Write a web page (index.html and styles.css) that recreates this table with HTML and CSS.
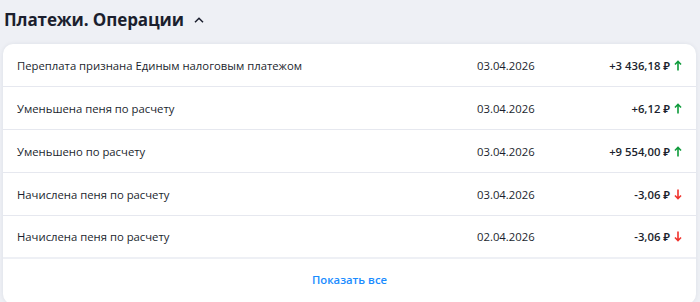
FILE: index.html
```html
<!DOCTYPE html>
<html lang="ru">
<head>
<meta charset="utf-8">
<link rel="stylesheet" href="styles.css">
</head>
<body>
<div class="page">
  <div class="header">
    <h2 class="title">Платежи. Операции</h2>
    <svg class="chevron" width="10" height="6" viewBox="0 0 10 6"><path d="M1 5.2 L5 1.2 L9 5.2" fill="none" stroke="#1b1f2e" stroke-width="1.5"/></svg>
  </div>
  <div class="card">
    <div class="row">
      <div class="name">Переплата признана Единым налоговым платежом</div>
      <div class="date">03.04.2026</div>
      <div class="amount">+3 436,18 ₽<svg class="arrow" width="8" height="11" viewBox="0 0 8 11"><path d="M4 10.5 V1.5 M1 4.5 L4 1.3 L7 4.5" fill="none" stroke="#0d9b3a" stroke-width="1.6"/></svg></div>
    </div>
    <div class="row">
      <div class="name">Уменьшена пеня по расчету</div>
      <div class="date">03.04.2026</div>
      <div class="amount">+6,12 ₽<svg class="arrow" width="8" height="11" viewBox="0 0 8 11"><path d="M4 10.5 V1.5 M1 4.5 L4 1.3 L7 4.5" fill="none" stroke="#0d9b3a" stroke-width="1.6"/></svg></div>
    </div>
    <div class="row">
      <div class="name">Уменьшено по расчету</div>
      <div class="date">03.04.2026</div>
      <div class="amount">+9 554,00 ₽<svg class="arrow" width="8" height="11" viewBox="0 0 8 11"><path d="M4 10.5 V1.5 M1 4.5 L4 1.3 L7 4.5" fill="none" stroke="#0d9b3a" stroke-width="1.6"/></svg></div>
    </div>
    <div class="row">
      <div class="name">Начислена пеня по расчету</div>
      <div class="date">03.04.2026</div>
      <div class="amount">-3,06 ₽<svg class="arrow" width="8" height="11" viewBox="0 0 8 11"><path d="M4 0.5 V9.5 M1 6.5 L4 9.7 L7 6.5" fill="none" stroke="#f0322c" stroke-width="1.6"/></svg></div>
    </div>
    <div class="row last">
      <div class="name">Начислена пеня по расчету</div>
      <div class="date">02.04.2026</div>
      <div class="amount">-3,06 ₽<svg class="arrow" width="8" height="11" viewBox="0 0 8 11"><path d="M4 0.5 V9.5 M1 6.5 L4 9.7 L7 6.5" fill="none" stroke="#f0322c" stroke-width="1.6"/></svg></div>
    </div>
    <div class="footer"><a class="show-all" href="#">Показать все</a></div>
  </div>
</div>
</body>
</html>
```
FILE: styles.css
```css
* { box-sizing: border-box; }
html, body { margin: 0; padding: 0; }
body {
  background: #eef0f5;
  font-family: "Open Sans", "Noto Sans", sans-serif;
  color: #1b1f2e;
  width: 700px;
  height: 302px;
  overflow: hidden;
}
.page {
  padding: 5px 4px 0 3px;
}
.header {
  display: flex;
  align-items: center;
  gap: 10px;
  height: 28px;
  padding-left: 1px;
}
.title {
  margin: 0;
  font-size: 17px;
  font-weight: 700;
  letter-spacing: -0.1px;
  color: #1b1f2e;
}
.chevron { margin-top: 1px; }
.card {
  margin-top: 11px;
  background: #fff;
  border-radius: 10px;
  box-shadow: 0 0 4px rgba(30, 40, 70, 0.08);
  height: 260px;
}
.row {
  display: grid;
  grid-template-columns: 1fr 117px 88px;
  align-items: center;
  height: 43px;
  padding: 0 14px 0 14px;
  border-bottom: 1.5px solid #e6e8ef;
  font-size: 11.3px;
}
.row.last { border-bottom: 2px solid #eef0f5; }
.amount {
  display: flex;
  justify-content: flex-end;
  align-items: center;
  gap: 4px;
  font-weight: 600;
}
.arrow { display: block; }
.footer {
  display: flex;
  justify-content: center;
  align-items: center;
  height: 40px;
}
.show-all {
  color: #1a8cff;
  font-weight: 600;
  font-size: 11.3px;
  text-decoration: none;
}
```
